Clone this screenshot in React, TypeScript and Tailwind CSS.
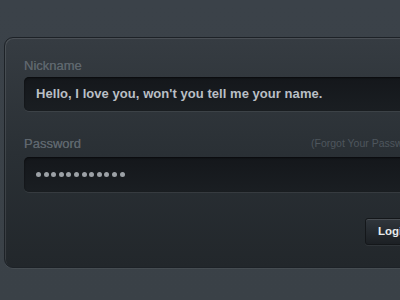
import React from 'react';

const LoginPanel: React.FC = () => {
  const dots = Array.from({ length: 12 });

  return (
    <div className="w-[400px] h-[300px] overflow-hidden bg-gradient-to-b from-[#3b4249] to-[#3a4147] pt-[37px] pl-[4px] font-['Liberation_Sans',Arial,sans-serif]">
      <div className="w-[440px] h-[231px] rounded-l-[9px] border border-[#1d2227] bg-gradient-to-b from-[#363c42] via-[#2a3035] to-[#22272b] shadow-[inset_1px_1px_0_rgba(255,255,255,0.1),0_1px_0_rgba(255,255,255,0.06)] pl-[19px] pt-[20px]">
        <div className="h-[15px] text-[13px] leading-[15px] text-[#5e666d] [text-shadow:0_0_0.4px_#5e666d]">Nickname</div>
        <div className="mt-[4px] h-[34px] w-[420px] rounded-[5px] bg-gradient-to-b from-[#14171b] to-[#1a1e22] shadow-[inset_0_1px_2px_rgba(0,0,0,0.6),0_1px_0_rgba(255,255,255,0.07)] flex items-center pl-[12px]">
          <span className="font-bold text-[13px] text-[#b9bfc5] tracking-[0.05px]">
            Hello, I love you, won't you tell me your name.
          </span>
        </div>

        <div className="mt-[25px] h-[15px] flex items-center">
          <span className="w-[287px] text-[13px] leading-[15px] text-[#5e666d] [text-shadow:0_0_0.4px_#5e666d]">Password</span>
          <span className="text-[10.5px] leading-[15px] text-[#4e565d] whitespace-nowrap">(Forgot Your Password?)</span>
        </div>
        <div className="mt-[6px] h-[35px] w-[420px] rounded-[5px] bg-gradient-to-b from-[#14171b] to-[#1a1e22] shadow-[inset_0_1px_2px_rgba(0,0,0,0.6),0_1px_0_rgba(255,255,255,0.07)] flex items-center pl-[12px] gap-[2.6px]">
          {dots.map((_, i) => (
            <span key={i} className="w-[5px] h-[5px] rounded-full bg-[#9ca1a6]" />
          ))}
        </div>

        <div className="mt-[26px] ml-[341px]">
          <button className="h-[27px] px-[12px] rounded-[3px] border border-[#14171a] bg-gradient-to-b from-[#30363c] to-[#1c2024] shadow-[inset_0_1px_0_rgba(255,255,255,0.12),0_1px_0_rgba(255,255,255,0.06)] text-[11.5px] font-bold text-[#e8eaec]">
            Login
          </button>
        </div>
      </div>
    </div>
  );
};

export default function App() {
  return <LoginPanel />;
}
